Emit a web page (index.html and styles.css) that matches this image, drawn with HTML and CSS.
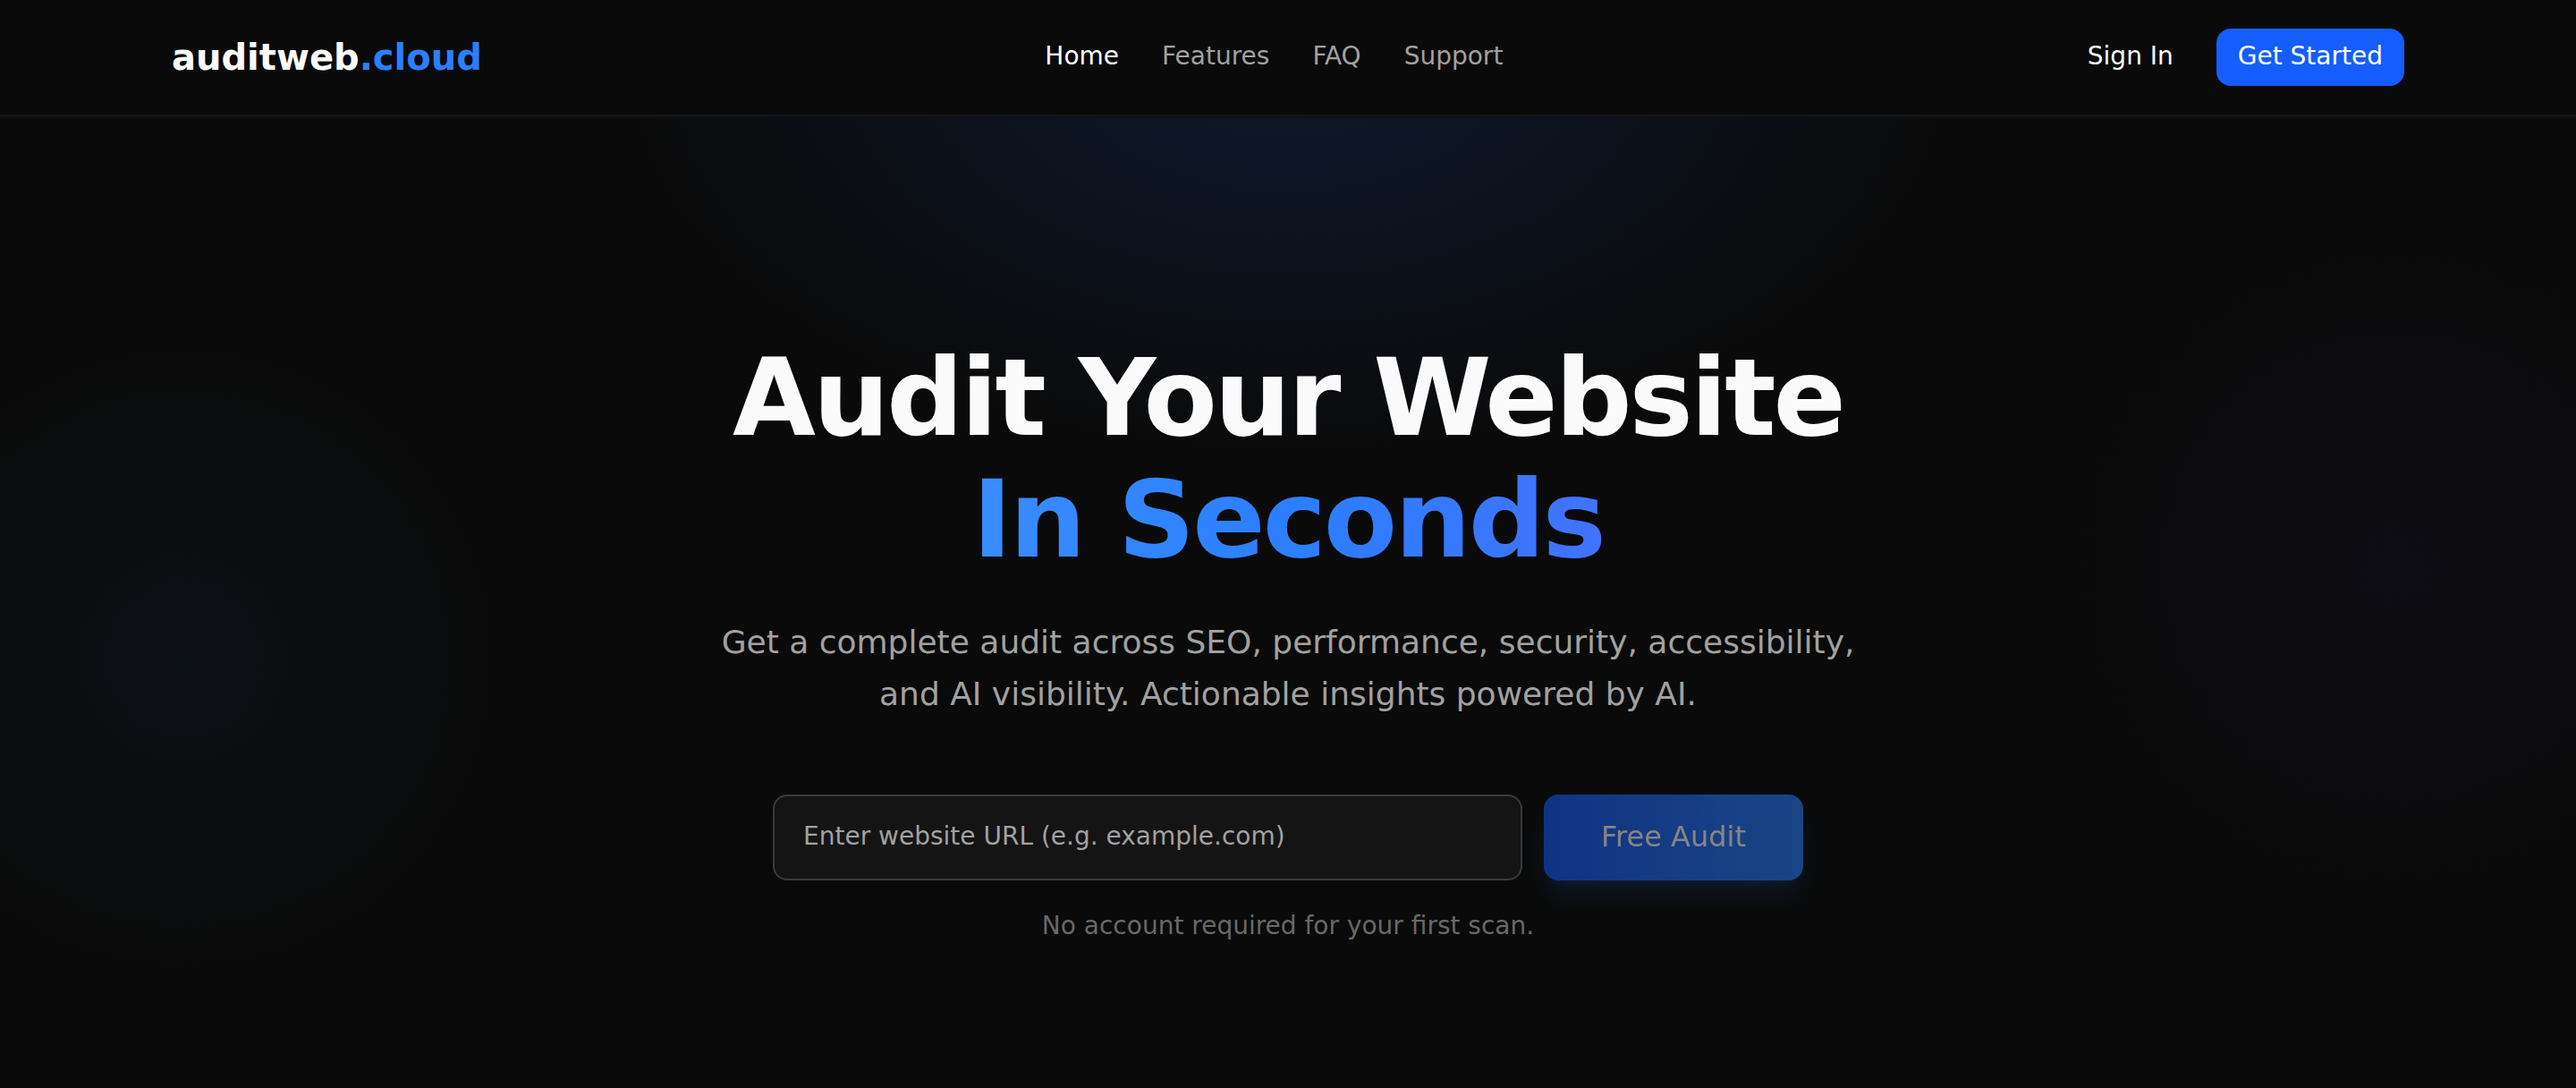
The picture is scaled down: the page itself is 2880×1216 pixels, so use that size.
FILE: index.html
```html
<!DOCTYPE html>
<html lang="en">
<head>
  <meta charset="UTF-8">
  <meta name="viewport" content="width=device-width, initial-scale=1">
  <title>auditweb.cloud</title>
  <link rel="stylesheet" href="styles.css">
</head>
<body>
  <header class="header">
    <div class="header-inner">
      <a href="#" class="logo">auditweb<span>.cloud</span></a>
      <nav class="nav">
        <a href="#" class="active">Home</a>
        <a href="#">Features</a>
        <a href="#">FAQ</a>
        <a href="#">Support</a>
      </nav>
      <div class="actions">
        <a href="#" class="sign-in">Sign In</a>
        <a href="#" class="get-started">Get Started</a>
      </div>
    </div>
  </header>

  <main class="hero">
    <!-- Background glows -->
    <div class="glow glow-top"></div>
    <div class="glow glow-left"></div>
    <div class="glow glow-right"></div>

    <div class="hero-content">
      <h1>Audit Your Website <span>In Seconds</span></h1>
      <p class="subtitle">Get a complete audit across SEO, performance, security, accessibility, and AI visibility. Actionable insights powered by AI.</p>

      <form class="audit-form">
        <input type="text" placeholder="Enter website URL (e.g. example.com)">
        <button type="submit" disabled>Free Audit</button>
      </form>
      <p class="note">No account required for your first scan.</p>
    </div>
  </main>
</body>
</html>
```
FILE: styles.css
```css
* {
  box-sizing: border-box;
}

body {
  margin: 0;
  min-height: 100vh;
  display: flex;
  flex-direction: column;
  background: #0a0a0a;
  color: #fafafa;
  font-family: "DejaVu Sans", sans-serif;
  font-size: 28px;
  overflow: hidden;
}

a {
  color: inherit;
  text-decoration: none;
}

.header {
  border-bottom: 2px solid #151515;
}

.header-inner {
  display: flex;
  justify-content: space-between;
  align-items: center;
  width: 2560px;
  height: 128px;
  margin: 0 auto;
  padding: 0 32px;
}

.logo {
  font-size: 40px;
  font-weight: bold;
}

.logo span {
  color: #2b7fff;
}

.nav {
  display: flex;
  gap: 48px;
  padding-bottom: 3px;
  color: #a1a1a1;
}

.nav .active {
  color: #fff;
}

.actions {
  display: flex;
  align-items: center;
  gap: 24px;
}

.sign-in,
.get-started {
  height: 64px;
  padding: 0 24px;
  line-height: 62px;
  border-radius: 16px;
}

.get-started {
  background: #155dfc;
  color: #fff;
}

.hero {
  position: relative;
  flex: 1;
  border-top: 2px solid rgba(43, 127, 255, 0.06);
  overflow: hidden;
}

.glow {
  position: absolute;
}

.glow-top {
  top: -502px;
  left: 690px;
  width: 1500px;
  height: 880px;
  background: radial-gradient(closest-side, rgba(38, 110, 255, 0.14), rgba(38, 110, 255, 0));
}

.glow-left {
  top: 244px;
  left: -155px;
  width: 720px;
  height: 720px;
  background: radial-gradient(closest-side, rgba(56, 145, 235, 0.05), rgba(56, 145, 235, 0));
}

.glow-right {
  top: 122px;
  left: 2300px;
  width: 760px;
  height: 760px;
  background: radial-gradient(closest-side, rgba(105, 90, 255, 0.04), rgba(105, 90, 255, 0));
}

.hero-content {
  position: relative;
  width: 1792px;
  margin: 0 auto;
  padding-top: 245px;
  text-align: center;
}

h1 {
  margin: 0;
  font-size: 120px;
  line-height: 136px;
  letter-spacing: -3px;
}

h1 span {
  display: block;
  background: linear-gradient(to right, #51a2ff, #2b7fff, #615fff);
  -webkit-background-clip: text;
  background-clip: text;
  color: transparent;
}

.subtitle {
  width: 1344px;
  margin: 40px auto 0;
  font-size: 36px;
  line-height: 58px;
  color: #a1a1a1;
}

.audit-form {
  display: flex;
  gap: 24px;
  width: 1152px;
  margin: 83px auto 0;
}

.audit-form input {
  flex: 1;
  min-width: 0;
  height: 96px;
  padding: 0 32px 4px;
  font: inherit;
  color: #fafafa;
  background: #141414;
  border: 2px solid #3a3a3a;
  border-radius: 16px;
}

.audit-form input::placeholder {
  color: #a1a1a1;
}

.audit-form button {
  width: 290px;
  height: 96px;
  padding: 0 0 2px;
  font-family: inherit;
  font-size: 32px;
  color: #fff;
  background: linear-gradient(to right, #155dfc, #2b7fff);
  border: none;
  border-radius: 16px;
  box-shadow: 0 20px 30px -6px rgba(43, 127, 255, 0.25), 0 8px 12px -8px rgba(43, 127, 255, 0.25);
  opacity: 0.5;
}

.note {
  margin: 31px 0 0;
  line-height: 40px;
  color: #686868;
}
```
